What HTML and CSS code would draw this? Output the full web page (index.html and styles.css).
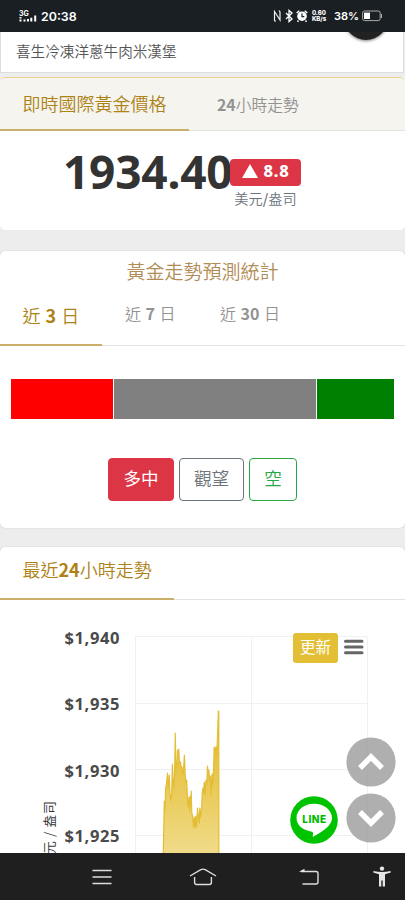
FILE: index.html
```html
<!DOCTYPE html>
<html lang="zh-Hant">
<head>
<meta charset="utf-8">
<meta name="viewport" content="width=device-width, initial-scale=1">
<title>即時國際黃金價格</title>
<link rel="stylesheet" href="styles.css">
</head>
<body>
<div class="phone">
  <header class="status">
    <svg class="signal" width="20" height="14" viewBox="0 0 20 14">
      <text x="0" y="6.500" class="net">3G</text>
      <path d="M1.5 8v1.500M1.500 10.500v2M5.500 10.500v2M9 10v2.500M12.300 8.800v3.700M16.200 6.500v6" stroke="#fff" stroke-width="2"/>
    </svg>
    <span class="clock">20:38</span>
    <span class="spacer"></span>
    <svg width="9" height="14" viewBox="0 0 9 14" fill="none" stroke="#eee" stroke-width="1.2"><path d="M2.600 12.500L1.500 11.500V2.500L7 11V3L6 1.500"/></svg>
    <svg class="bt" width="9" height="14" viewBox="0 0 9 14" fill="none" stroke="#fff" stroke-width="1.3"><path d="M1 4l6 6-3 2.500v-11L7 4l-6 6"/></svg>
    <svg class="alarm" width="12" height="14" viewBox="0 0 12 14"><circle cx="6" cy="7.2" r="4.800" fill="#fff"/><path d="M.7 4L3.300 1.700M11.300 4L8.700 1.700M2.500 11.500l-1 1.300M9.500 11.500l1 1.300" stroke="#fff" stroke-width="1.500"/><path d="M6 4.400v3.200h2.300" fill="none" stroke="#1a1f24" stroke-width="1.200"/></svg>
    <span class="speed"><b>0.60</b><b>KB/s</b></span>
    <span class="percent">38%</span>
    <svg width="21" height="12" viewBox="0 0 21 12"><rect x=".6" y="1" width="17.600" height="9.600" rx="2" fill="none" stroke="#aaa"/><rect x="2" y="2.600" width="6" height="6.400" fill="#fff"/><path d="M19.500 4v4" stroke="#aaa"/></svg>
  </header>

  <main class="page">
    <div class="ad"><span>喜生冷凍洋蔥牛肉米漢堡</span><i class="knob"></i></div>

    <section class="card price-card">
      <nav class="tabs price-tabs">
        <a class="tab active">即時國際黃金價格</a>
        <a class="tab"><b>24</b>小時走勢</a>
      </nav>
      <div class="quote">
        <strong class="price">1934.40</strong>
        <div class="change">
          <span class="badge"><svg width="16" height="14" viewBox="0 0 16 14"><path d="M8 0l8 14H0z" fill="#fff"/></svg>8.8</span>
          <span class="unit">美元<b>/</b>盎司</span>
        </div>
      </div>
    </section>

    <section class="card forecast">
      <h2>黃金走勢預測統計</h2>
      <nav class="tabs range-tabs">
        <a class="tab active">近 <b>3</b> 日</a>
        <a class="tab">近 <b>7</b> 日</a>
        <a class="tab">近 <b>30</b> 日</a>
      </nav>
      <div class="bar"><i class="long"></i><i class="hold"></i><i class="short"></i></div>
      <div class="votes">
        <button class="vote red">多中</button>
        <button class="vote gray">觀望</button>
        <button class="vote green">空</button>
      </div>
    </section>

    <section class="card trend">
      <nav class="tabs trend-tabs"><a class="tab active">最近<b>24</b>小時走勢</a></nav>
      <div class="chart">
        <svg width="405" height="253" viewBox="0 600 405 253">
          <defs><linearGradient id="gold" x1="0" y1="711" x2="0" y2="900" gradientUnits="userSpaceOnUse"><stop offset="0" stop-color="#e3bd35"/><stop offset=".3" stop-color="#e8c548"/><stop offset="1" stop-color="#f4e7ab"/></linearGradient></defs>
          <path class="grid" d="M135.5 853V636.5H367.5V853M251.5 636V853M135 703.5H367M135 769.5H367M135 835.5H367"/>
          <path fill="url(#gold)" stroke="#e3bd35" stroke-width="1.2" stroke-linejoin="round" d="M163.2 856L164.3 801L165 811L165.6 788L166.5 784L167.5 773L168.2 788L169.3 775L170 793L170.8 801L171.6 797L172.4 764L173.2 781L174.2 789L174.8 764L175.3 733L176 768L177 767L177.6 750L178.3 754L178.8 749L179.4 763L180.5 762L181.3 768L182 767L182.6 774L183.4 772L184.4 755L185.1 773L186 784L186.7 780L187.5 800L188.4 807L189 797L189.6 811L190.3 796L190.8 805L191.2 791L191.8 813L192.6 816L193.4 827L194.2 817L195 828L195.8 816L196.6 827L197.5 808L198.5 818L199.3 823L199.8 808L200.6 817L201.6 808L202.3 792L203 788L203.5 793L204.3 782L205.2 795L206 780L206.8 784L207.5 766L208.2 772L208.8 770L209.6 780L210.3 776L211 795L212 774L212.7 785L213.5 770L214.2 747L215 751L215.8 747L216.5 757L217.3 742L218.4 711L218.8 711V856"/>
          <g class="axis"><text x="64.500" y="644" textLength="55">$1,940</text><text x="64.500" y="710.3" textLength="55">$1,935</text><text x="64.500" y="776.7" textLength="55">$1,930</text><text x="64.500" y="842" textLength="55">$1,925</text></g>
          <text class="axis-title" transform="translate(53.5 868) rotate(-90)" textLength="67">美元 / 盎司</text>
        </svg>
        <button class="refresh">更新</button>
        <svg class="menu" width="20" height="16" viewBox="0 0 20 16"><path d="M1.500 2.200h16.500M1.500 7.900h16.500M1.500 13.700h16.500" stroke="#666" stroke-width="3" stroke-linecap="round"/></svg>
      </div>
    </section>

    <svg class="line" width="48" height="48" viewBox="0 0 48 48"><circle cx="24" cy="24" r="23.800" fill="#00c300"/><path d="M24 7.800C14 7.800 6.500 14 6.500 22.100c0 7.300 6.700 12.700 15.400 13.600 1.600.3 1.200 2.400.8 5.200C32 36.200 42 30 42 22.100 42 14 34 7.800 24 7.800z" fill="#fff"/><text x="12.200" y="26.500" textLength="24">LINE</text></svg>
    <svg class="up" width="50" height="50" viewBox="0 0 50 50"><circle cx="25" cy="25" r="24.600"/><path d="M14 31l11-11 11 11"/></svg>
    <svg class="down" width="50" height="50" viewBox="0 0 50 50"><circle cx="25" cy="25" r="24.600"/><path d="M14 19l11 11 11-11"/></svg>
  </main>

  <footer class="system">
    <svg width="20" height="18" viewBox="0 0 20 18"><path d="M.5 2.500h19M.5 9h19M.5 15.500h19"/></svg>
    <svg class="home" width="28" height="18" viewBox="0 0 28 18"><path d="M1 8L11.800 1.600q2.200-1 4.400 0L27 8M5.600 9v5.500q0 2 2 2h12.800q2 0 2-2V9"/></svg>
    <svg class="back" width="20" height="18" viewBox="0 0 20 18"><path d="M3.500 16h13.500q2 0 2-2V5.500q0-2-2-2H2"/><path d="M0 3.700L5.500.8V4z" class="solid"/></svg>
    <svg class="access" width="18" height="21" viewBox="0 0 18 21"><circle cx="9" cy="2.600" r="2.200" class="solid"/><path class="solid" d="M.5 5q8.500 2 17 0l.3 1.600-5.800 1.600V20.500H9.700v-6H8.300v6H6V8.200L.2 6.600z"/></svg>
  </footer>
</div>
</body>
</html>
```
FILE: styles.css
```css
* { box-sizing: border-box; }
body {
  margin: 0;
  background: #ededed;
  font-family: "Noto Sans", "Noto Sans CJK TC", sans-serif;
  font-weight: 350;
}
.phone { width: 405px; height: 900px; display: flex; flex-direction: column; overflow: hidden; }

.status { flex: 0 0 32px; display: flex; align-items: center; padding: 0 22px 0 19px; background: #1a1f24; color: #fff; }
.net { font: 700 7px Inter, sans-serif; fill: #fff; }
.clock { margin-left: 2px; font: 600 12.4px Inter, sans-serif; }
.spacer { flex: 1; }
.bt { margin-left: 3px; }
.alarm { margin-left: 2px; }
.speed { display: flex; flex-direction: column; width: 15px; margin: 0 7px 0 4px; font: 800 6px/6px Inter, sans-serif; }
.speed b { font-weight: 800; }
.percent { margin-right: 3px; font: 600 11px Inter, sans-serif; }

.page { position: relative; flex: 1; min-height: 0; overflow: hidden; background: #ededed; }
.ad { position: relative; height: 41px; margin: 0 1px 4px 0; padding: 9px 15px; border: 1px solid #ddd; border-top: 0; background: #fff; color: #555; font: 350 14.6px/20px "Noto Sans CJK TC", sans-serif; white-space: nowrap; }
.knob { position: absolute; left: 343px; top: -36px; width: 44px; height: 44px; border-radius: 50%; background: #222; box-shadow: 0 1px 3px rgba(0,0,0,.5); }

.card { background: #fff; border-radius: 5px; overflow: hidden; box-shadow: 0 0 1px rgba(0,0,0,.3); }
.tabs { display: flex; border-bottom: 1px solid #e3e3e3; color: #929292; font-family: "Noto Sans CJK TC", sans-serif; white-space: nowrap; }
.tab b { font-weight: 700; }
.tab.active { color: #ad8317; border-bottom: 2px solid #c8b06a; margin-bottom: -1px; font-size: 18px; }

.price-card { height: 153px; box-shadow: none; }
.price-tabs { height: 54px; background: #f5f4ef; border-top: 1px solid #ebd28e; border-radius: 5px 5px 0 0; }
.price-tabs .tab { width: 189px; padding-left: 22.5px; line-height: 51px; }
.price-tabs .tab + .tab { padding-left: 28px; font-size: 15.8px; line-height: 53px; }
.quote { display: flex; padding: 17px 0 0 63px; }
.price { width: 167px; color: #333; font: 700 46px/47px "Noto Sans", sans-serif; letter-spacing: -.2px; white-space: nowrap; }
.change { position: relative; display: flex; flex-direction: column; align-items: center; width: 71px; padding-top: 11px; }
.badge { display: flex; align-items: center; justify-content: center; gap: 6px; width: 71px; height: 27px; border-radius: 4px; background: #dc3545; color: #fff; font: 800 16.5px/24px "Noto Sans", sans-serif; letter-spacing: .7px; padding-bottom: 3px; }
.unit { color: #6c757d; font: 350 14.2px/22px "Noto Sans CJK TC", sans-serif; margin-top: 1px; white-space: nowrap; }
.unit b { font-weight: 500; }

.forecast { height: 277px; margin-top: 21px; }
.forecast h2 { margin: 0; height: 45px; color: #b28c55; font: 350 19px/40px "Noto Sans CJK TC", sans-serif; text-align: center; }
.range-tabs { height: 50px; }
.range-tabs .tab { font-size: 16px; line-height: 35px; padding-left: 23px; word-spacing: 1px; }
.range-tabs .active { width: 102px; padding-left: 22.5px; font-size: 18px; line-height: 38px; }
.range-tabs .tab + .tab { width: 95px; }
.bar { display: flex; gap: 1px; height: 40px; margin: 33px 11px 39px; }
.long { width: 102px; background: #f00; }
.hold { width: 202px; background: #808080; }
.short { flex: 1; background: #008000; }
.votes { display: flex; justify-content: center; gap: 5px; }
.vote { height: 43px; width: 65.5px; padding: 0 0 4px; border: 1px solid; border-radius: 4px; background: #fff; font: 350 17.6px/34px "Noto Sans CJK TC", sans-serif; }
.red { background: #dc3545; border-color: #dc3545; color: #fff; font-weight: 400; }
.gray { color: #6c757d; }
.green { width: 47.5px; color: #28a745; }

.trend { height: 310px; margin-top: 19px; }
.trend-tabs { height: 53px; }
.trend-tabs .active { width: 174px; padding-left: 22.5px; line-height: 45px; }
.chart { position: relative; }
.chart > svg { display: block; }
.grid { fill: none; stroke: #f0f0f0; }
.axis text { font: 700 16.5px "Noto Sans", sans-serif; fill: #4a4a4a; }
.axis-title { font: 350 13px "Noto Sans CJK TC", sans-serif; fill: #333; }
.refresh { position: absolute; left: 293px; top: 33px; width: 45px; height: 30px; padding: 0 0 4px; border: 0; border-radius: 3px; background: #e3bf36; color: #fff; font: 400 15.5px/24px "Noto Sans CJK TC", sans-serif; }
.chart > .menu { position: absolute; left: 344px; top: 38.5px; }

.line { position: absolute; left: 290px; top: 764px; }
.line text { font: 800 10px Inter, sans-serif; fill: #00b900; }
.up, .down { position: absolute; left: 345.5px; fill: #000; }
.up { top: 704.5px; }
.down { top: 761px; }
.up circle, .down circle { fill: #969696; opacity: .76; }
.up path, .down path { fill: none; stroke: #fff; stroke-width: 5.5; }

.system { flex: 0 0 47px; display: flex; align-items: center; padding: 0 14px 0 91.5px; background: #1f1f1f; }
.home { margin-left: 77.5px; }
.back { margin-left: 82px; }
.access { margin-left: auto; }
.system path { fill: none; stroke: #ddd; stroke-width: 1.4; }
.system .solid { fill: #e5e5e5; stroke: none; }
```
